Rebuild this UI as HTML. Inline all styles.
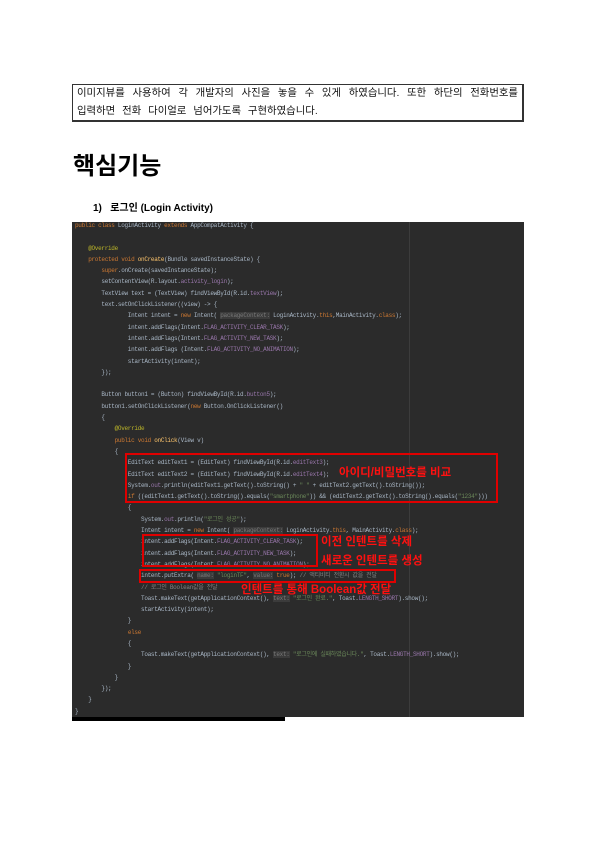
<!DOCTYPE html>
<html><head><meta charset="utf-8"><style>
body{margin:0;width:595px;height:842px;background:#fff;position:relative;overflow:hidden;font-family:"Liberation Sans","Noto Sans CJK KR",sans-serif}
.box{position:absolute;left:72px;top:84px;width:452px;height:38px;border:1px solid #333;border-right-width:2px;border-bottom-width:2px;font-size:10.4px;line-height:18px;padding:0 4px;box-sizing:border-box;color:#111}
.l1{display:block;text-align:justify;text-align-last:justify;white-space:nowrap}
.l2{word-spacing:4px}
h1{position:absolute;left:73px;top:146px;margin:0;font-size:24px;font-weight:bold}
.sub{position:absolute;left:93px;top:199px;font-size:10px;font-weight:bold}
.code{position:absolute;left:72px;top:222px;width:452px;height:495px;background:#2b2b2b;overflow:hidden}
.code pre{margin:0;position:absolute;left:3px;top:-2px;font-family:"Liberation Mono","Noto Sans CJK KR",monospace;font-size:6px;line-height:11.3px;color:#a9b7c6;letter-spacing:-0.3px}
.k{color:#cc7832}.a{color:#bbb529}.p{color:#9876aa}.s{color:#6a8759}.f{color:#ffc66d}.h{color:#777;background:#3b3b3b}
.vl{position:absolute;left:337px;top:0;width:1px;height:495px;background:#3c3c3c}
.rb{position:absolute;border:2px solid #e00000;box-sizing:border-box}
.lbl{position:absolute;color:#ff1010;font-weight:bold;font-size:11.5px;white-space:nowrap}
.bot{position:absolute;left:72px;top:717px;width:213px;height:4px;background:#000}
</style></head><body>
<div class="box"><span class="l1">이미지뷰를 사용하여 각 개발자의 사진을 놓을 수 있게 하였습니다. 또한 하단의 전화번호를</span><span class="l2">입력하면 전화 다이얼로 넘어가도록 구현하였습니다.</span></div>
<h1>핵심기능</h1>
<div class="sub">1)&nbsp;&nbsp; 로그인 (Login Activity)</div>
<div class="code"><div class="vl"></div><pre><span class="k">public class</span> LoginActivity <span class="k">extends</span> AppCompatActivity {

    <span class="a">@Override</span>
    <span class="k">protected void</span> <span class="f">onCreate</span>(Bundle savedInstanceState) {
        <span class="k">super</span>.onCreate(savedInstanceState);
        setContentView(R.layout.<span class="p">activity_login</span>);
        TextView text = (TextView) findViewById(R.id.<span class="p">textView</span>);
        text.setOnClickListener((view) -> {
                Intent intent = <span class="k">new</span> Intent( <span class="h">packageContext:</span> LoginActivity.<span class="k">this</span>,MainActivity.<span class="k">class</span>);
                intent.addFlags(Intent.<span class="p">FLAG_ACTIVITY_CLEAR_TASK</span>);
                intent.addFlags(Intent.<span class="p">FLAG_ACTIVITY_NEW_TASK</span>);
                intent.addFlags (Intent.<span class="p">FLAG_ACTIVITY_NO_ANIMATION</span>);
                startActivity(intent);
        });

        Button button1 = (Button) findViewById(R.id.<span class="p">button5</span>);
        button1.setOnClickListener(<span class="k">new</span> Button.OnClickListener()
        {
            <span class="a">@Override</span>
            <span class="k">public void</span> <span class="f">onClick</span>(View v)
            {
                EditText editText1 = (EditText) findViewById(R.id.<span class="p">editText3</span>);
                EditText editText2 = (EditText) findViewById(R.id.<span class="p">editText4</span>);
                System.<span class="p">out</span>.println(editText1.getText().toString() + <span class="s">" "</span> + editText2.getText().toString());
                <span class="k">if</span> ((editText1.getText().toString().equals(<span class="s">"smartphone"</span>)) && (editText2.getText().toString().equals(<span class="s">"1234"</span>)))
                {
                    System.<span class="p">out</span>.println(<span class="s">"로그인 성공"</span>);
                    Intent intent = <span class="k">new</span> Intent( <span class="h">packageContext:</span> LoginActivity.<span class="k">this</span>, MainActivity.<span class="k">class</span>);
                    intent.addFlags(Intent.<span class="p">FLAG_ACTIVITY_CLEAR_TASK</span>);
                    intent.addFlags(Intent.<span class="p">FLAG_ACTIVITY_NEW_TASK</span>);
                    intent.addFlags(Intent.<span class="p">FLAG_ACTIVITY_NO_ANIMATION</span>);
                    intent.putExtra( <span class="h">name:</span> <span class="s">"loginTF"</span>, <span class="h">value:</span> <span class="k">true</span>); <span style="color:#808080">// 액티비티 전환시 값을 전달</span>
                    <span style="color:#808080">// 로그인 Boolean값을 전달</span>
                    Toast.makeText(getApplicationContext(), <span class="h">text:</span> <span class="s">"로그인 완료."</span>, Toast.<span class="p">LENGTH_SHORT</span>).show();
                    startActivity(intent);
                }
                <span class="k">else</span>
                {
                    Toast.makeText(getApplicationContext(), <span class="h">text:</span> <span class="s">"로그인에 실패하였습니다."</span>, Toast.<span class="p">LENGTH_SHORT</span>).show();
                }
            }
        });
    }
}</pre></div>
<div class="rb" style="left:125px;top:453px;width:373px;height:50px"></div>
<div class="rb" style="left:142px;top:534px;width:176px;height:33px"></div>
<div class="rb" style="left:139px;top:569px;width:257px;height:14px"></div>
<div class="lbl" style="left:339px;top:464px">아이디/비밀번호를 비교</div>
<div class="lbl" style="left:321px;top:533px">이전 인텐트를 삭제</div>
<div class="lbl" style="left:321px;top:552px">새로운 인텐트를 생성</div>
<div class="lbl" style="left:241px;top:581px">인텐트를 통해 Boolean값 전달</div>
<div class="bot"></div>
</body></html>
